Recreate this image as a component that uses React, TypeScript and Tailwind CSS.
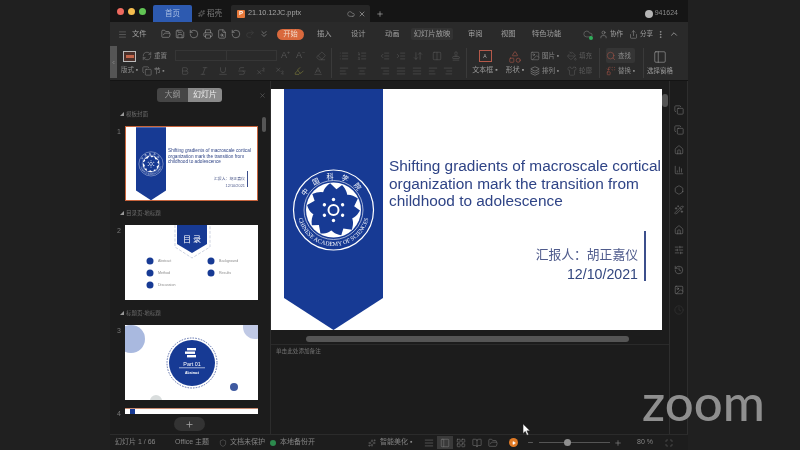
import React from "react";
import clsx from "clsx";
import {
  AlignCenter,
  AlignJustify,
  AlignLeft,
  AlignRight,
  ArrowDownUp,
  BarChart3,
  Bold,
  ChevronLeft,
  ChevronUp,
  Clock,
  Cloud,
  Columns2,
  Copy,
  Eraser,
  FileSearch,
  FolderOpen,
  Hexagon,
  History,
  Image,
  Indent,
  Italic,
  LayoutGrid,
  Layers,
  List,
  ListOrdered,
  Maximize,
  Menu,
  MoreVertical,
  Minus,
  Outdent,
  PaintBucket,
  PanelLeft,
  Play,
  Plus,
  Printer,
  Redo2,
  RotateCcw,
  Save,
  Search,
  Share,
  Shield,
  Shirt,
  Sparkles,
  Strikethrough,
  Subscript,
  Superscript,
  Underline,
  User,
  Wand2,
  X,
  BookOpen,
  Replace,
  Baseline,
  Highlighter,
  SlidersHorizontal,
  Shapes,
  ChevronsDown,
  Home,
  RefreshCw,
  Stamp,
} from "lucide-react";

const BLUE = "#173a94";

const Logo = ({ cx, cy }: { cx: number; cy: number }) => (
  <g transform={`translate(${cx} ${cy})`}>
    <circle r="40" fill="none" stroke="#fff" strokeWidth="1.2" />
    <circle r="27.5" fill="#fff" />
    <circle r="29.5" fill="none" stroke="#c9d2e8" strokeWidth=".8" />
    <defs>
      <path id="bottomArc" d="M-36 0 A36 36 0 0 0 36 0" />
      <path id="topArc" d="M-31 0 A31 31 0 0 1 31 0" />
    </defs>
    <text fontSize="6" fill="#fff" fontFamily="Liberation Serif, serif">
      <textPath href="#bottomArc" startOffset="50%" textAnchor="middle">
        CHINESE ACADEMY OF SCIENCES
      </textPath>
    </text>
    <text fontSize="7" fill="#fff" fontFamily="Noto Sans CJK SC, sans-serif" letterSpacing="7">
      <textPath href="#topArc" startOffset="50%" textAnchor="middle">
        中国科学院
      </textPath>
    </text>
    {[0, 72, 144, 216, 288].map((a) => (
      <path
        key={a}
        transform={`rotate(${a + 8})`}
        d="M0 0 C-15 -6 -16 -18 -7 -26 L0 -21 L5 -26 C15 -18 15 -6 0 0Z"
        fill={BLUE}
      />
    ))}
    <circle r="5" fill="none" stroke="#fff" strokeWidth="2" />
    {[0, 60, 120, 180, 240, 300].map((a) => (
      <circle key={a} r="1.7" cy="-10.5" fill="#fff" transform={`rotate(${a})`} />
    ))}
  </g>
);

// the ribbon-shaped banner, drawn at the size of the big slide
const Banner = ({ className }: { className: string }) => (
  <svg viewBox="0 0 99 241" className={clsx("shrink-0", className)}>
    <polygon points="0,0 99,0 99,209 49.5,241 0,209" fill={BLUE} />
    <Logo cx={49.5} cy={121} />
  </svg>
);

const MainSlide = () => (
  <div className="flex h-[241px] w-[391px] shrink-0 overflow-hidden bg-white pl-[13px]">
    <Banner className="h-[241px] w-[99px]" />
    <div className="flex min-w-0 flex-1 flex-col pl-[6px] pt-[68px] text-[#2f4486]">
      <div className="whitespace-nowrap text-[15.4px] leading-[17.6px]">
        <p>Shifting gradients of macroscale cortical</p>
        <p>organization mark the transition from</p>
        <p>childhood to adolescence</p>
      </div>
      <div className="mt-[21px] flex justify-end pr-[16px]">
        <div className="flex flex-col items-end pt-[15px] pr-[6px]">
          <span className="text-[12.8px] leading-[18px] text-[#4f5b8c]">汇报人：胡正嘉仪</span>
          <span className="text-[14.2px] leading-[20px] text-[#33477f]">12/10/2021</span>
        </div>
        <div className="h-[50px] w-[2px] bg-[#3c4f8c]" />
      </div>
    </div>
  </div>
);

const Thumb1 = () => (
  <div className="flex h-[75px] w-[133px] overflow-hidden border border-[#c8643c] bg-white pl-[10px]">
    <Banner className="h-[73.5px] w-[30px]" />
    <div className="flex flex-1 flex-col pl-[2px] pt-[21px] text-[#2f4486]">
      <div className="whitespace-nowrap text-[4.7px] leading-[5.5px]">
        <p>Shifting gradients of macroscale cortical</p>
        <p>organization mark the transition from</p>
        <p>childhood to adolescence</p>
      </div>
      <div className="mt-[6px] flex justify-end pr-[9px]">
        <div className="flex flex-col items-end pr-[2px] pt-[4px] text-[3.9px] leading-[7px] text-[#4f5b8c]">
          <span>汇报人：胡正嘉仪</span>
          <span>12/10/2021</span>
        </div>
        <div className="h-[16px] w-[1px] bg-[#3c4f8c]" />
      </div>
    </div>
  </div>
);

const tocItem = (x: number, y: number, label: string) => (
  <g key={label}>
    <circle cx={x} cy={y} r="3.5" fill={BLUE} />
    <text x={x + 8} y={y + 1.3} fontSize="3.6" fill="#8a8a8a" fontFamily="Liberation Sans, sans-serif">
      {label}
    </text>
  </g>
);

const Thumb2 = () => (
  <svg viewBox="0 0 133 75" className="block h-[75px] w-[133px] bg-white">
    <polyline points="50,0 50,22 67,33 85,22 85,0" fill="none" stroke="#b9c0d4" strokeWidth=".7" strokeDasharray="3 1.5" />
    <polygon points="52,0 82,0 82,19 67,28 52,19" fill={BLUE} />
    <text x="67" y="17" textAnchor="middle" fontSize="8" fill="#fff" fontFamily="Noto Sans CJK SC, sans-serif">
      目 录
    </text>
    {tocItem(25, 36, "Abstract")}
    {tocItem(25, 48, "Method")}
    {tocItem(25, 60, "Discussion")}
    {tocItem(86, 36, "Background")}
    {tocItem(86, 48, "Results")}
  </svg>
);

const Thumb3 = () => (
  <svg viewBox="0 0 133 75" className="block h-[75px] w-[133px] bg-white">
    <circle cx="6" cy="14" r="14" fill="#a9b9df" />
    <circle cx="130" cy="2" r="12" fill="#c0c9e5" />
    <circle cx="31" cy="76" r="6" fill="#d9dddd" />
    <circle cx="109" cy="62" r="4" fill="#3f5aa0" />
    <circle cx="67" cy="38" r="25" fill="none" stroke="#3a5199" strokeWidth=".8" strokeDasharray="1.6 1.2" />
    <circle cx="67" cy="38" r="23" fill={BLUE} />
    <rect x="62" y="23" width="9" height="2.4" fill="#fff" />
    <rect x="60" y="26.5" width="10" height="2.4" fill="#fff" />
    <rect x="62" y="30" width="9" height="2.4" fill="#fff" />
    <text x="67" y="41" textAnchor="middle" fontSize="5.4" fill="#fff" fontFamily="Liberation Sans, sans-serif">
      Part 01
    </text>
    <rect x="54" y="42.5" width="26" height=".7" fill="#dfe5f4" />
    <text x="67" y="48.5" textAnchor="middle" fontSize="3.4" fontWeight="700" fill="#fff" fontFamily="Liberation Sans, sans-serif">
      Abstract
    </text>
  </svg>
);

const ThumbRow = ({ label, num, children }: { label?: string; num: number; children: React.ReactNode }) => (
  <div className="flex flex-col">
    {label && (
      <div className="flex h-[24px] items-center pl-[10px] pt-[1px] text-[5.5px] text-[#6d6d6d]">
        <span className="mr-[2px] text-[4px] text-[#999]">◢</span>
        {label}
      </div>
    )}
    <div className="flex">
      <span className="w-[15px] pl-[7px] pt-[1px] text-[7px] leading-[9px] text-[#777]">{num}</span>
      {children}
    </div>
  </div>
);

const SidePanel = () => (
  <div className="relative flex w-[161px] shrink-0 flex-col border-r border-[#2c2c2c]">
    <div className="relative flex h-[21px] shrink-0 items-end justify-center pr-[1px]">
      <div className="flex h-[14px] w-[65px] overflow-hidden rounded-[3px] text-[8px] leading-[14px]">
        <span className="w-[31px] bg-[#454545] text-center text-[#9a9a9a]">大纲</span>
        <span className="flex-1 bg-[#8a8a8a] text-center text-[#ececec]">幻灯片</span>
      </div>
      <X size={7} className="absolute left-[149px] top-[11px] text-[#666]" />
    </div>
    <div className="h-[314px] overflow-hidden">
      <ThumbRow label="模板封面" num={1}>
        <Thumb1 />
      </ThumbRow>
      <ThumbRow label="目录页-地标题" num={2}>
        <Thumb2 />
      </ThumbRow>
      <div className="mt-[1px]">
        <ThumbRow label="标题页-地标题" num={3}>
          <Thumb3 />
        </ThumbRow>
      </div>
      <div className="mt-[8px]">
        <ThumbRow num={4}>
          <div className="flex h-[6px] w-[133px] border-t border-[#c98a70] bg-white pl-[5px]">
            <div className="h-full w-[5px] bg-[#173a94]" />
          </div>
        </ThumbRow>
      </div>
    </div>
    <div className="flex flex-1 items-start justify-center pr-[1px]">
      <div className="mt-[1px] flex h-[14px] w-[31px] items-center justify-center rounded-full bg-[#333]">
        <Plus size={9} className="text-[#aaa]" />
      </div>
    </div>
    {/* scrollbar of the thumbnail list */}
    <div className="absolute left-[152px] top-[36px] h-[15px] w-[4px] rounded-full bg-[#555]" />
  </div>
);

const Rb = ({ icon: Icon, c = "text-[#5c5c5c]", cell = "w-[19px]" }: { icon: React.ElementType; c?: string; cell?: string }) => (
  <span className={clsx("flex shrink-0 items-center justify-center", cell)}>
    <Icon size={10} strokeWidth={1.3} className={c} />
  </span>
);

const Sep = () => <div className="mx-[1px] h-[30px] w-px shrink-0 bg-[#3a3a3a]" />;

const IconLabel = ({ icon: Icon, label, c = "text-[#8a8a8a]", ic = "text-[#8a8a8a]" }: { icon: React.ElementType; label: string; c?: string; ic?: string }) => (
  <div className="flex h-[15px] items-center gap-[2px]">
    <Icon size={10} strokeWidth={1.2} className={ic} />
    <span className={clsx("whitespace-nowrap text-[6.5px]", c)}>{label}</span>
  </div>
);

const Ribbon = () => (
  <div className="flex h-[34px] shrink-0 items-center bg-[#2a2a2a]">
    <div className="flex h-[32px] w-[7px] shrink-0 items-center justify-center self-start bg-[#555]">
      <ChevronLeft size={5} className="text-[#bbb]" />
    </div>
    <div className="flex w-[25px] flex-col items-center">
      <div className="mb-[3px] flex h-[11px] w-[13px] items-center justify-center border border-[#bbb] bg-[#4b302a]">
        <div className="h-[3px] w-[8px] bg-[#c2654a]" />
      </div>
      <span className="text-[6.5px] text-[#8f8f8f]">版式 ▪</span>
    </div>
    <div className="flex w-[33px] flex-col">
      <IconLabel icon={RefreshCw} label="重置" />
      <IconLabel icon={Copy} label="节 ▪" />
    </div>
    <div className="flex w-[155px] flex-col">
      <div className="flex h-[15px] items-center">
        <div className="h-[11px] w-[52px] border border-[#363636]" />
        <div className="h-[11px] w-[50px] border-y border-r border-[#363636]" />
        <span className="ml-[4px] w-[15px] text-[9px] text-[#555]">A⁺</span>
        <span className="w-[15px] text-[9px] text-[#555]">A⁻</span>
        <Rb icon={Eraser} />
      </div>
      <div className="flex h-[15px] items-center">
        <Rb icon={Bold} />
        <Rb icon={Italic} />
        <Rb icon={Underline} />
        <Rb icon={Strikethrough} />
        <Rb icon={Superscript} />
        <Rb icon={Subscript} />
        <Rb icon={Highlighter} c="text-[#8b8a3d]" />
        <Rb icon={Baseline} />
      </div>
    </div>
    <Sep />
    <div className="flex w-[132px] flex-col">
      <div className="flex h-[15px] items-center pl-[2px]">
        <Rb icon={List} cell="w-[18px]" />
        <Rb icon={ListOrdered} cell="w-[18px]" />
        <span className="w-[6px]" />
        <Rb icon={Outdent} cell="w-[16px]" />
        <Rb icon={Indent} cell="w-[16px]" />
        <Rb icon={ArrowDownUp} cell="w-[18px]" />
        <Rb icon={Columns2} cell="w-[20px]" />
        <Rb icon={Stamp} cell="w-[18px]" />
      </div>
      <div className="flex h-[15px] items-center pl-[2px]">
        <Rb icon={AlignLeft} cell="w-[18px]" />
        <Rb icon={AlignCenter} cell="w-[18px]" />
        <span className="w-[6px]" />
        <Rb icon={AlignRight} cell="w-[16px]" />
        <Rb icon={AlignJustify} cell="w-[16px]" />
        <Rb icon={AlignJustify} cell="w-[16px]" />
        <Rb icon={AlignLeft} cell="w-[15px]" />
        <Rb icon={AlignRight} cell="w-[15px]" />
      </div>
    </div>
    <Sep />
    <div className="flex w-[34px] flex-col items-center">
      <div className="mb-[3px] flex h-[12px] w-[13px] items-center justify-center border border-[#b5594a] text-[5px] text-[#aaa]">A</div>
      <span className="whitespace-nowrap text-[7px] text-[#9a9a9a]">文本框 ▪</span>
    </div>
    <div className="flex w-[26px] flex-col items-center">
      <Shapes size={14} strokeWidth={1} className="mb-[1px] text-[#b5594a]" />
      <span className="whitespace-nowrap text-[7px] text-[#9a9a9a]">形状 ▪</span>
    </div>
    <div className="ml-[2px] flex w-[37px] flex-col">
      <IconLabel icon={Image} label="图片 ▪" />
      <IconLabel icon={Layers} label="排列 ▪" ic="text-[#aaa]" />
    </div>
    <div className="flex w-[31px] flex-col">
      <IconLabel icon={PaintBucket} label="填充" c="text-[#5c5c5c]" ic="text-[#5c5c5c]" />
      <IconLabel icon={Shirt} label="轮廓" c="text-[#5c5c5c]" ic="text-[#5c5c5c]" />
    </div>
    <Sep />
    <div className="ml-[5px] flex w-[36px] flex-col">
      <div className="w-[29px] rounded-[2px] bg-[#353535]">
        <IconLabel icon={Search} label="查找" ic="text-[#b5594a]" />
      </div>
      <IconLabel icon={Replace} label="替换 ▪" ic="text-[#b5594a]" />
    </div>
    <Sep />
    <div className="ml-[1px] flex w-[28px] flex-col items-center">
      <PanelLeft size={14} strokeWidth={1} className="mb-[2px] text-[#a8a8a8]" />
      <span className="whitespace-nowrap text-[6.5px] text-[#9a9a9a]">选择窗格</span>
    </div>
  </div>
);

const tabs = ["插入", "设计", "动画"];

const MenuBar = () => (
  <div className="flex h-[24px] shrink-0 items-center bg-[#2a2a2a] text-[7.3px] text-[#a0a0a0]">
    <Menu size={9} strokeWidth={1.2} className="ml-[8px] text-[#8a8a8a]" />
    <span className="ml-[5px] w-[27px]">文件</span>
    <div className="flex text-[#a8a8a8]">
      {[FolderOpen, Save, RotateCcw, Printer, FileSearch, RotateCcw, Redo2, ChevronsDown].map((Icon, i) => (
        <span key={i} className="flex w-[14px] justify-center">
          <Icon size={10} strokeWidth={1.3} className={i === 6 ? "text-[#444]" : undefined} />
        </span>
      ))}
    </div>
    <span className="ml-[6px] flex h-[11px] w-[27px] items-center justify-center rounded-full bg-[#d9693d] text-[#f2d9c9]">开始</span>
    <div className="ml-[13px] flex gap-[20px]">
      {tabs.map((t) => (
        <span key={t} className="w-[14px] whitespace-nowrap">{t}</span>
      ))}
    </div>
    <span className="ml-[12px] flex h-[12px] w-[42px] items-center justify-center rounded-[2px] bg-[#333] whitespace-nowrap">幻灯片放映</span>
    <span className="ml-[15px] w-[14px] whitespace-nowrap">审阅</span>
    <span className="ml-[19px] w-[14px] whitespace-nowrap">视图</span>
    <span className="ml-[17px] w-[30px] whitespace-nowrap">特色功能</span>
    <div className="relative ml-[21px]">
      <Cloud size={10} strokeWidth={1.2} className="text-[#888]" />
      <span className="absolute -bottom-px right-0 size-[4px] rounded-full bg-[#2fae5a]" />
    </div>
    <User size={9} strokeWidth={1.3} className="ml-[6px]" />
    <span className="ml-[2px] w-[16px] whitespace-nowrap text-[6.5px]">协作</span>
    <Share size={9} strokeWidth={1.3} className="ml-[3px]" />
    <span className="ml-[2px] w-[14px] whitespace-nowrap text-[6.5px]">分享</span>
    <MoreVertical size={9} className="ml-[2px]" />
    <ChevronUp size={10} className="ml-[4px]" />
  </div>
);

const TitleBar = () => (
  <div className="flex h-[22px] shrink-0 items-end bg-[#151515] text-[7.5px] text-[#9a9a9a]">
    <div className="flex h-full w-[43px] items-center gap-[4px] pl-[7px]">
      <span className="size-[7px] rounded-full bg-[#ee6a5f]" />
      <span className="size-[7px] rounded-full bg-[#f5bd4f]" />
      <span className="size-[7px] rounded-full bg-[#61c454]" />
    </div>
    <div className="flex h-[17px] w-[39px] items-center justify-center rounded-t-[2px] bg-[#2d5ab0] text-[#a9bfe4]">首页</div>
    <div className="flex h-[17px] w-[39px] items-center gap-[2px] pl-[6px] text-[#7c7c7c]">
      <Sparkles size={7} />
      <span className="whitespace-nowrap">稻壳</span>
    </div>
    <div className="flex h-[17px] w-[139px] items-center rounded-t-[2px] bg-[#262626] pl-[6px]">
      <span className="flex size-[8px] items-center justify-center rounded-[1px] bg-[#e8793a] text-[6px] font-bold text-white">P</span>
      <span className="ml-[3px] text-[7.3px] text-[#a4a4a4]">21.10.12JC.pptx</span>
      <Cloud size={8} className="ml-[46px] text-[#888]" />
      <X size={8} className="ml-[3px] text-[#aaa]" />
    </div>
    <div className="flex h-[17px] w-[20px] items-center justify-center">
      <Plus size={8} className="text-[#aaa]" />
    </div>
    <div className="ml-auto flex h-[17px] items-center gap-[2px] pr-[10px] text-[7px] text-[#8a8a8a]">
      <span className="size-[8px] rounded-full bg-[#b5b5b5]" />
      941624
    </div>
  </div>
);

const sideIcons = [Copy, Copy, Home, BarChart3, Hexagon, Wand2, Home, SlidersHorizontal, History, Image, Clock];

const RightBar = () => (
  <div className="flex w-[19px] shrink-0 flex-col items-center border-l border-r border-[#2e2e2e] pt-[19px]">
    {sideIcons.map((Icon, i) => (
      <span key={i} className="flex h-[20px] items-center justify-center">
        <Icon size={10} strokeWidth={1.3} className={i === 10 ? "text-[#3a3a3a]" : "text-[#7e7e7e]"} />
      </span>
    ))}
  </div>
);

const StatusBar = () => (
  <div className="flex h-[16px] shrink-0 items-center border-t border-[#2b2b2b] bg-[#1d1d1d] text-[7px] text-[#858585]">
    <span className="ml-[5px] w-[60px] whitespace-nowrap">幻灯片 1 / 66</span>
    <span className="w-[44px] whitespace-nowrap">Office 主题</span>
    <Shield size={8} strokeWidth={1.2} />
    <span className="ml-[3px] w-[40px] whitespace-nowrap">文档未保护</span>
    <span className="size-[6px] rounded-full bg-[#2c8a4d]" />
    <span className="ml-[4px] w-[88px] whitespace-nowrap">本地备份开</span>
    <Sparkles size={8} strokeWidth={1.2} />
    <span className="ml-[4px] w-[41px] whitespace-nowrap">智能美化 ▪</span>
    <div className="flex items-center">
      {[AlignJustify, PanelLeft, LayoutGrid, BookOpen, FolderOpen].map((Icon, i) => (
        <span key={i} className={clsx("flex h-[13px] w-[16px] items-center justify-center", i === 1 && "bg-[#3a3a3a]")}>
          <Icon size={10} strokeWidth={1.2} />
        </span>
      ))}
    </div>
    <span className="ml-[8px] flex size-[9px] items-center justify-center rounded-full bg-[#e07a25]">
      <Play size={4} fill="#fff" className="text-white" />
    </span>
    <Minus size={7} className="ml-[9px]" />
    <div className="relative ml-[5px] h-px w-[71px] bg-[#555]">
      <span className="absolute -top-[3px] left-[25px] size-[7px] rounded-full bg-[#8f8f8f]" />
    </div>
    <Plus size={8} className="ml-[4px]" />
    <span className="ml-[15px] w-[28px] whitespace-nowrap">80 %</span>
    <Maximize size={8} strokeWidth={1.2} />
  </div>
);

export default function App() {
  return (
    <div className="relative flex h-[450px] w-[800px] overflow-hidden bg-[#202020] font-['Liberation_Sans','Noto_Sans_CJK_SC',sans-serif]">
      <div className="flex h-full w-full pl-[110px] blur-[0.45px]">
        <div className="flex h-full w-[578px] shrink-0 flex-col bg-[#1c1c1c]">
          <TitleBar />
          <MenuBar />
          <Ribbon />
          <div className="flex min-h-0 flex-1 border-t border-[#141414]">
            <SidePanel />
            <div className="flex min-w-0 flex-1 flex-col">
              <div className="flex pt-[8px]">
                <MainSlide />
                <div className="relative w-[7px]">
                  <div className="h-[13px] w-[6px] translate-y-[5px] rounded-full bg-[#555]" />
                </div>
              </div>
              <div className="mt-[4px] flex h-[11px] items-center border-b border-[#2a2a2a] pl-[35px]">
                <div className="h-[6px] w-[323px] rounded-full bg-[#555]" />
              </div>
              <p className="pl-[5px] pt-[2px] text-[5.6px] leading-[8px] text-[#737373]">单击此处添加备注</p>
            </div>
            <RightBar />
          </div>
          <StatusBar />
        </div>
      </div>
      {/* recording watermark and pointer lie over the page */}
      <span className="absolute left-[642px] top-[372px] text-[51px] font-medium leading-[60px] text-[#8f8f8f] font-['Lato','Liberation_Sans',sans-serif]">
        zoom
      </span>
      <svg viewBox="0 0 10 14" className="absolute left-[522px] top-[424px] h-[12px] w-[9px]">
        <path d="M1 0 L1 11 L3.6 8.6 L5.6 13 L7.4 12.2 L5.4 8 L9 8 Z" fill="#fff" stroke="#222" strokeWidth=".5" />
      </svg>
    </div>
  );
}
